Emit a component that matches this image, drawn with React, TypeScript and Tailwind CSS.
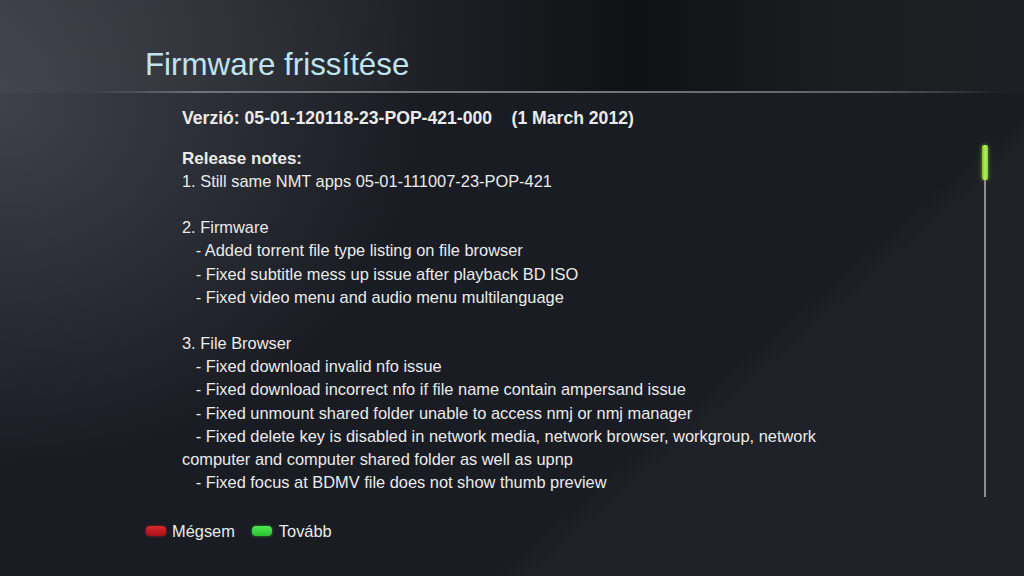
const notes: string[] = [
  '1. Still same NMT apps 05-01-111007-23-POP-421',
  '',
  '2. Firmware',
  '   - Added torrent file type listing on file browser',
  '   - Fixed subtitle mess up issue after playback BD ISO',
  '   - Fixed video menu and audio menu multilanguage',
  '',
  '3. File Browser',
  '   - Fixed download invalid nfo issue',
  '   - Fixed download incorrect nfo if file name contain ampersand issue',
  '   - Fixed unmount shared folder unable to access nmj or nmj manager',
  '   - Fixed delete key is disabled in network media, network browser, workgroup, network computer and computer shared folder as well as upnp',
  '   - Fixed focus at BDMV file does not show thumb preview',
];

export default function App() {
  return (
    <div
      className="relative w-[1024px] h-[576px] overflow-hidden flex flex-col bg-[#1a1c24] text-[#ebebeb]"
      style={{ fontFamily: '"Liberation Sans", Arial, sans-serif' }}
    >
      {/* backdrop sheen */}
      <div className="pointer-events-none absolute inset-0 bg-[radial-gradient(ellipse_420px_360px_at_0%_18%,rgba(92,96,104,0.55),transparent)]" />
      <div className="pointer-events-none absolute inset-0 bg-[linear-gradient(139deg,transparent_68.5%,rgba(52,54,58,0.22)_71%)]" />

      <div className="relative h-[93px] shrink-0 bg-[linear-gradient(to_right,rgba(70,73,80,0.55)_0%,rgba(44,46,52,0.5)_35%,rgba(14,15,17,0.85)_62%,rgba(28,29,31,0.9)_82%,rgba(30,32,36,0.7)_100%)]">
        <h1 className="pl-[145px] pt-[47px] text-[31.3px] leading-[36px] text-[#bfe4ef] font-normal">
          Firmware frissítése
        </h1>
        <div className="absolute left-[90px] right-[20px] bottom-0 h-[2px] bg-[linear-gradient(to_right,transparent,#6e7278_12%,#767a80_50%,#5e6268_85%,transparent)]" />
      </div>

      <div className="relative flex flex-1">
        <div className="pl-[182px] pt-[14px] flex-1">
          <div className="text-[17.6px] font-bold leading-[23px] whitespace-pre">
            {'Verzió: 05-01-120118-23-POP-421-000    (1 March 2012)'}
          </div>
          <div className="mt-[17px] text-[17px] font-bold leading-[23px]">Release notes:</div>
          <div className="w-[660px] text-[16.4px] leading-[23.15px]">
            {notes.map((line, i) => (
              <div key={i} className="whitespace-pre-wrap min-h-[23.15px]">
                {line}
              </div>
            ))}
          </div>
        </div>

        <div className="w-[12px] mr-[33px] shrink-0 pt-[52px] flex flex-col items-center">
          <div className="w-[6px] h-[35px] rounded-[2px] bg-[linear-gradient(to_right,#7fbf2a,#b8ee5a,#8fd233)] shadow-[0_0_4px_rgba(150,220,60,0.6)]" />
          <div className="w-[2px] h-[317px] bg-[#8a8d91]" />
        </div>
      </div>

      <div className="relative h-[78px] shrink-0 pl-[146px] pt-[21px] flex items-start gap-[17px] text-[16.4px] leading-[24px]">
        <div className="flex items-center gap-[6px]">
          <span className="w-[20px] h-[10px] rounded-[4px] bg-[linear-gradient(to_bottom,#d8262b,#a81216)] shadow-[0_0_3px_rgba(220,40,40,0.6)]" />
          <span>Mégsem</span>
        </div>
        <div className="flex items-center gap-[7px]">
          <span className="w-[20px] h-[10px] rounded-[4px] bg-[linear-gradient(to_bottom,#4de853,#27c22e)] shadow-[0_0_3px_rgba(60,220,60,0.6)]" />
          <span>Tovább</span>
        </div>
      </div>
    </div>
  );
}
